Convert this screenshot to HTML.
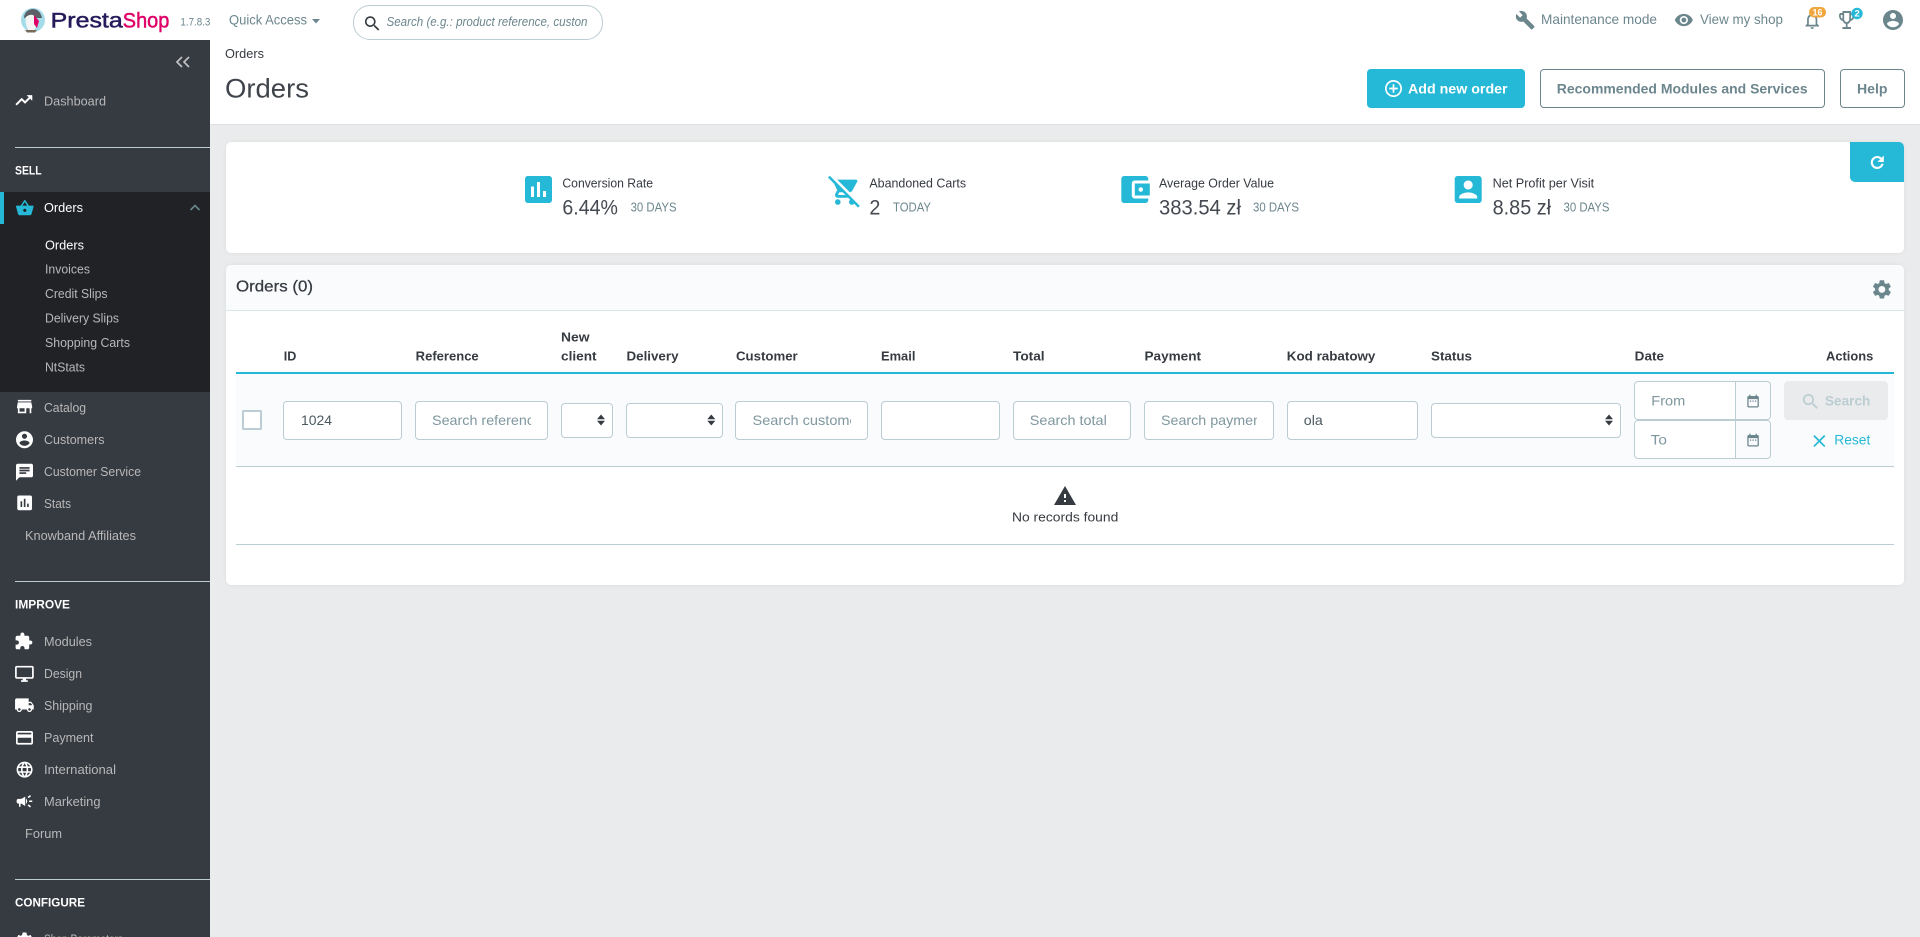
<!DOCTYPE html>
<html lang="en"><head><meta charset="utf-8"><title>Orders</title>
<style>
html,body{margin:0;padding:0;width:1920px;height:937px;overflow:hidden;background:#eaebec}
.b{position:absolute;box-sizing:border-box}
.i{background:#fff;border:1px solid #bbcdd2;border-radius:4px}
.card{background:#fff;border-radius:5px;box-shadow:0 0 4px rgba(0,0,0,.06)}
svg.o{position:absolute;left:0;top:0}
text{font-family:"Liberation Sans",sans-serif;font-size:13px;fill:#363a41;transform:translateY(-.7px)}
.s text,text.s{fill:#b8b8b8}
.h text{font-weight:bold;fill:#363a41}
.ph{fill:#7f979f;font-size:14px}
.g{fill:#6c868e}
.w{fill:#fff}
.n{font-weight:bold;fill:#fff;font-size:12px}
.v{font-size:21px;fill:#454a52}
</style></head><body>
<div class="b" style="left:0;top:0;width:1920px;height:40px;background:#fff"></div>
<div class="b" style="left:210px;top:40px;width:1710px;height:85px;background:#fff;border-bottom:1px solid #dfe1e3"></div>
<div class="b" style="left:0;top:40px;width:210px;height:897px;background:#363a41"></div>
<div class="b" style="left:0;top:192px;width:210px;height:200px;background:#202226"></div>
<div class="b" style="left:0;top:192px;width:4px;height:32px;background:#25b9d7"></div>
<div class="b" style="left:15px;top:147px;width:195px;height:1px;background:#bbcdd2"></div>
<div class="b" style="left:15px;top:581px;width:195px;height:1px;background:#bbcdd2"></div>
<div class="b" style="left:15px;top:879px;width:195px;height:1px;background:#bbcdd2"></div>
<div class="b" style="left:353px;top:5px;width:250px;height:35px;border:1px solid #bbcdd2;border-radius:17px;background:#fff"></div>
<div class="b" style="left:1367px;top:69px;width:158px;height:39px;background:#25b9d7;border-radius:4px"></div>
<div class="b" style="left:1540px;top:69px;width:285px;height:39px;border:1px solid #6c868e;border-radius:4px"></div>
<div class="b" style="left:1840px;top:69px;width:65px;height:39px;border:1px solid #6c868e;border-radius:4px"></div>
<div class="b card" style="left:226px;top:142px;width:1678px;height:111px"></div>
<div class="b" style="left:1850px;top:142px;width:54px;height:40px;background:#25b9d7;border-radius:0 5px 0 5px"></div>
<div class="b card" style="left:226px;top:265px;width:1678px;height:320px"></div>
<div class="b" style="left:226px;top:265px;width:1678px;height:46px;background:#fafbfc;border-bottom:1px solid #dbe6e9;border-radius:5px 5px 0 0"></div>
<div class="b" style="left:236px;top:372px;width:1658px;height:95px;background:#fafbfc;border-top:2px solid #25b9d7;border-bottom:1px solid #bbcdd2"></div>
<div class="b" style="left:236px;top:544px;width:1658px;height:1px;background:#bbcdd2"></div>
<div class="b" style="left:242px;top:410px;width:20px;height:20px;background:#fff;border:2px solid #bbcdd2;border-radius:2px"></div>
<div class="b i" style="left:283px;top:401px;width:119px;height:39px"></div>
<div class="b i" style="left:415px;top:401px;width:133px;height:39px"></div>
<div class="b i" style="left:561px;top:403px;width:52px;height:35px"></div>
<div class="b i" style="left:626px;top:403px;width:97px;height:35px"></div>
<div class="b i" style="left:735px;top:401px;width:133px;height:39px"></div>
<div class="b i" style="left:881px;top:401px;width:119px;height:39px"></div>
<div class="b i" style="left:1013px;top:401px;width:118px;height:39px"></div>
<div class="b i" style="left:1144px;top:401px;width:130px;height:39px"></div>
<div class="b i" style="left:1287px;top:401px;width:131px;height:39px"></div>
<div class="b i" style="left:1431px;top:403px;width:190px;height:35px"></div>
<div class="b i" style="left:1634px;top:381px;width:137px;height:39px"></div>
<div class="b" style="left:1735px;top:382px;width:35px;height:37px;background:#fafbfc;border-left:1px solid #bbcdd2;border-radius:0 4px 4px 0"></div>
<div class="b i" style="left:1634px;top:420px;width:137px;height:39px"></div>
<div class="b" style="left:1735px;top:421px;width:35px;height:37px;background:#fafbfc;border-left:1px solid #bbcdd2;border-radius:0 4px 4px 0"></div>
<div class="b" style="left:1784px;top:381px;width:104px;height:39px;background:#eaebec;border-radius:4px"></div>

<svg class="o" width="1920" height="937" viewBox="0 0 1920 937" xmlns="http://www.w3.org/2000/svg">
<!-- logo -->
<circle cx="33" cy="20" r="12" fill="#a4dbe8"/>
<path d="M24 18c0-6 5-9 9-9s8 3 9 9l-5 0-6-2z" fill="#5b6167"/>
<path d="M26 17c3-3 8-3 9 0l2 7-3 7h-5c-3-4-4-9-3-14z" fill="#f4f4f4"/>
<path d="M34 15l5 6-2 7-3-4z" fill="#df0067"/>
<path d="M25 30h12l-2 2.500h-8z" fill="#7a6a58"/>
<text x="50.700" y="28" textLength="72" lengthAdjust="spacingAndGlyphs" style="font-size:21px;fill:#251b5b;stroke:#251b5b;stroke-width:.5">Presta</text>
<text x="122.800" y="28" textLength="46.500" lengthAdjust="spacingAndGlyphs" style="font-size:21px;fill:#df0067;stroke:#df0067;stroke-width:.5">Shop</text>
<text x="180.400" y="26" class="g" textLength="30" lengthAdjust="spacingAndGlyphs" style="font-size:11px">1.7.8.3</text>
<text x="229" y="25" class="g" textLength="78" lengthAdjust="spacingAndGlyphs" style="font-size:14px">Quick Access</text>
<path d="M312 19h8l-4 4.500z" fill="#6c868e"/>
<path transform="translate(362.500 13.800) scale(.82)" fill="#363a41" d="M15.500 14h-.79l-.28-.27C15.410 12.590 16 11.110 16 9.500 16 5.910 13.090 3 9.500 3S3 5.910 3 9.500 5.910 16 9.500 16c1.610 0 3.090-.59 4.230-1.570l.27.28v.79l5 4.990L20.490 19l-4.990-5zm-6 0C7.010 14 5 11.990 5 9.500S7.010 5 9.500 5 14 7.010 14 9.500 11.990 14 9.500 14z"/>
<text x="386.500" y="26.700" class="g" textLength="201" lengthAdjust="spacingAndGlyphs" style="font-style:italic">Search (e.g.: product reference, custon</text>
<!-- header right -->
<path transform="translate(1515 10) scale(.85)" fill="#6c868e" d="M22.700 19l-9.100-9.100c.9-2.300.4-5-1.500-6.900-2-2-5-2.400-7.400-1.300L9 6 6 9 1.600 4.700C.4 7.100.9 10.100 2.900 12.100c1.900 1.900 4.600 2.400 6.900 1.500l9.100 9.100c.4.4 1 .4 1.400 0l2.300-2.300c.5-.4.5-1.100.1-1.400z"/>
<text x="1541" y="24.700" class="g" textLength="116" lengthAdjust="spacingAndGlyphs" style="font-size:14px">Maintenance mode</text>
<path transform="translate(1674 10.200) scale(.82)" fill="#6c868e" d="M12 4.500C7 4.500 2.730 7.610 1 12c1.730 4.390 6 7.500 11 7.500s9.270-3.110 11-7.500c-1.730-4.390-6-7.500-11-7.500zM12 17c-2.760 0-5-2.240-5-5s2.240-5 5-5 5 2.240 5 5-2.240 5-5 5zm0-8c-1.660 0-3 1.340-3 3s1.340 3 3 3 3-1.340 3-3-1.340-3-3-3z"/>
<text x="1700" y="24.700" class="g" textLength="83" lengthAdjust="spacingAndGlyphs" style="font-size:14px">View my shop</text>
<path transform="translate(1802 10.300) scale(.85)" fill="#6c868e" d="M12 22c1.100 0 2-.9 2-2h-4c0 1.100.9 2 2 2zm6-6v-5c0-3.070-1.630-5.640-4.500-6.320V4c0-.83-.67-1.500-1.500-1.500s-1.500.67-1.500 1.500v.68C7.640 5.360 6 7.920 6 11v5l-2 2v1h16v-1l-2-2zm-2 1H8v-6c0-2.480 1.510-4.500 4-4.500s4 2.020 4 4.500v6z"/>
<rect x="1809" y="7" width="17" height="10.500" rx="5" fill="#f0a63c"/>
<text x="1812.500" y="16.300" class="w" textLength="10" lengthAdjust="spacingAndGlyphs" style="font-size:9.500px;font-weight:bold">16</text>
<path transform="translate(1836.500 8) scale(.85 1)" fill="#6c868e" d="M19 5h-2V3H7v2H5c-1.100 0-2 .9-2 2v1c0 2.550 1.920 4.630 4.390 4.940.63 1.500 1.980 2.630 3.610 2.960V19H7v2h10v-2h-4v-3.100c1.630-.33 2.980-1.460 3.610-2.960C19.080 12.630 21 10.550 21 8V7c0-1.100-.9-2-2-2zM5 8V7h2v3.820C5.840 10.400 5 9.300 5 8zm7 6c-1.650 0-3-1.350-3-3V5h6v6c0 1.650-1.350 3-3 3zm7-6c0 1.300-.84 2.400-2 2.820V7h2v1z"/>
<circle cx="1857" cy="13.500" r="5.700" fill="#25b9d7"/>
<text x="1854.500" y="17.300" class="w" style="font-size:9.500px;font-weight:bold">2</text>
<path transform="translate(1881 8)" fill="#6c868e" d="M12 2C6.480 2 2 6.480 2 12s4.480 10 10 10 10-4.480 10-10S17.520 2 12 2zm0 3c1.660 0 3 1.340 3 3s-1.340 3-3 3-3-1.340-3-3 1.340-3 3-3zm0 14.200c-2.500 0-4.710-1.280-6-3.220.03-1.990 4-3.080 6-3.080 1.990 0 5.970 1.090 6 3.080-1.290 1.940-3.500 3.220-6 3.220z"/>
<!-- toolbar -->
<text x="225" y="58.500" textLength="39" lengthAdjust="spacingAndGlyphs">Orders</text>
<text x="225" y="98" textLength="84" lengthAdjust="spacingAndGlyphs" style="font-size:27px;fill:#3f444b">Orders</text>
<path transform="translate(1383.300 78.300) scale(.85)" fill="#fff" d="M13 7h-2v4H7v2h4v4h2v-4h4v-2h-4V7zm-1-5C6.480 2 2 6.480 2 12s4.480 10 10 10 10-4.480 10-10S17.520 2 12 2zm0 18c-4.410 0-8-3.590-8-8s3.590-8 8-8 8 3.590 8 8-3.590 8-8 8z"/>
<text x="1408" y="94" class="w" textLength="99.600" lengthAdjust="spacingAndGlyphs" style="font-size:14px;font-weight:bold">Add new order</text>
<text x="1556.800" y="94" class="g" textLength="250.800" lengthAdjust="spacingAndGlyphs" style="font-size:14px;font-weight:bold">Recommended Modules and Services</text>
<text x="1857" y="94" class="g" textLength="30.500" lengthAdjust="spacingAndGlyphs" style="font-size:14px;font-weight:bold">Help</text>
<path transform="translate(1867.900 153.100) scale(.78)" fill="#fff" stroke="#fff" stroke-width=".7" d="M17.650 6.350C16.200 4.900 14.210 4 12 4c-4.420 0-7.990 3.580-7.990 8s3.570 8 7.990 8c3.730 0 6.840-2.550 7.730-6h-2.080c-.82 2.330-3.040 4-5.650 4-3.310 0-6-2.690-6-6s2.690-6 6-6c1.660 0 3.140.69 4.220 1.780L13 11h7V4l-2.350 2.350z"/>
<!-- sidebar -->
<path d="M182 57l-5 5 5 5M189 57l-5 5 5 5" fill="none" stroke="#bebebe" stroke-width="1.800"/>
<path transform="translate(14 90.500) scale(.82)" fill="#fff" stroke="#fff" stroke-width=".6" d="M16 6l2.290 2.290-4.880 4.880-4-4L2 16.590 3.410 18l6-6 4 4 6.300-6.290L22 12V6z"/>
<g class="s">
<text x="44" y="106" textLength="62" lengthAdjust="spacingAndGlyphs">Dashboard</text>
<text x="45" y="274" textLength="45" lengthAdjust="spacingAndGlyphs">Invoices</text>
<text x="45" y="298.700" textLength="62.500" lengthAdjust="spacingAndGlyphs">Credit Slips</text>
<text x="45" y="323" textLength="74" lengthAdjust="spacingAndGlyphs">Delivery Slips</text>
<text x="45" y="347.500" textLength="85" lengthAdjust="spacingAndGlyphs">Shopping Carts</text>
<text x="45" y="372" textLength="40" lengthAdjust="spacingAndGlyphs">NtStats</text>
<text x="44" y="412.500" textLength="42" lengthAdjust="spacingAndGlyphs">Catalog</text>
<text x="44" y="444.500" textLength="60.500" lengthAdjust="spacingAndGlyphs">Customers</text>
<text x="44" y="476.500" textLength="97" lengthAdjust="spacingAndGlyphs">Customer Service</text>
<text x="44" y="508.500" textLength="27" lengthAdjust="spacingAndGlyphs">Stats</text>
<text x="25" y="540.500" textLength="111" lengthAdjust="spacingAndGlyphs">Knowband Affiliates</text>
<text x="44" y="646.500" textLength="48" lengthAdjust="spacingAndGlyphs">Modules</text>
<text x="44" y="678.500" textLength="38" lengthAdjust="spacingAndGlyphs">Design</text>
<text x="44" y="710.500" textLength="48.500" lengthAdjust="spacingAndGlyphs">Shipping</text>
<text x="44" y="742.500" textLength="49.500" lengthAdjust="spacingAndGlyphs">Payment</text>
<text x="44" y="774.500" textLength="72" lengthAdjust="spacingAndGlyphs">International</text>
<text x="44" y="806.500" textLength="56.500" lengthAdjust="spacingAndGlyphs">Marketing</text>
<text x="25" y="838.500" textLength="37" lengthAdjust="spacingAndGlyphs">Forum</text>
<text x="44" y="944" textLength="79" lengthAdjust="spacingAndGlyphs">Shop Parameters</text>
</g>
<text x="15" y="175" class="n" textLength="26.600" lengthAdjust="spacingAndGlyphs">SELL</text>
<text x="15" y="609" class="n" textLength="55" lengthAdjust="spacingAndGlyphs">IMPROVE</text>
<text x="15" y="907" class="n" textLength="70" lengthAdjust="spacingAndGlyphs">CONFIGURE</text>
<path transform="translate(15.200 198.400) scale(.8)" fill="#25b9d7" d="M17.210 9l-4.380-6.560c-.19-.28-.51-.42-.83-.42-.32 0-.64.14-.83.43L6.790 9H2c-.55 0-1 .45-1 1 0 .09.01.18.04.27l2.540 9.270c.23.840 1 1.460 1.920 1.460h13c.92 0 1.690-.62 1.930-1.460l2.540-9.270L23 10c0-.55-.45-1-1-1h-4.790zM9 9l3-4.400L15 9H9zm3 8c-1.100 0-2-.9-2-2s.9-2 2-2 2 .9 2 2-.9 2-2 2z"/>
<text x="44" y="212.500" class="w" textLength="39" lengthAdjust="spacingAndGlyphs">Orders</text>
<path d="M190.500 210l4.500-4.500 4.500 4.500" fill="none" stroke="#6c868e" stroke-width="1.600"/>
<text x="45" y="250" class="w" textLength="39" lengthAdjust="spacingAndGlyphs">Orders</text>
<g fill="#fff">
<path transform="translate(14.500 396.500) scale(.84)" d="M20 4H4v2h16V4zm1 10v-2l-1-5H4l-1 5v2h1v6h10v-6h4v6h2v-6h1zm-9 4H6v-4h6v4z"/>
<path transform="translate(14.300 429.500) scale(.85)" d="M12 2C6.480 2 2 6.480 2 12s4.480 10 10 10 10-4.480 10-10S17.520 2 12 2zm0 3c1.660 0 3 1.340 3 3s-1.340 3-3 3-3-1.340-3-3 1.340-3 3-3zm0 14.200c-2.500 0-4.710-1.280-6-3.220.03-1.990 4-3.080 6-3.080 1.990 0 5.970 1.090 6 3.080-1.290 1.940-3.500 3.220-6 3.220z"/>
<path transform="translate(14.300 462) scale(.85)" d="M20 2H4c-1.100 0-1.990.9-1.990 2L2 22l4-4h14c1.100 0 2-.9 2-2V4c0-1.100-.9-2-2-2zM6 9h12v2H6V9zm8 5H6v-2h8v2zm4-6H6V6h12v2z"/>
<path transform="translate(14.800 493) scale(.82)" d="M19 3H5c-1.100 0-2 .9-2 2v14c0 1.100.9 2 2 2h14c1.100 0 2-.9 2-2V5c0-1.100-.9-2-2-2zM9 17H7v-7h2v7zm4 0h-2V7h2v10zm4 0h-2v-4h2v4z"/>
<path transform="translate(14 631.700) scale(.8)" d="M20.500 11H19V7c0-1.100-.9-2-2-2h-4V3.500C13 2.120 11.880 1 10.500 1S8 2.120 8 3.500V5H4c-1.100 0-1.990.9-1.990 2v3.800H3.500c1.490 0 2.700 1.210 2.700 2.700s-1.210 2.700-2.700 2.700H2V20c0 1.100.9 2 2 2h3.800v-1.500c0-1.490 1.210-2.700 2.700-2.700 1.490 0 2.700 1.210 2.700 2.700V22H17c1.100 0 2-.9 2-2v-4h1.500c1.380 0 2.500-1.120 2.500-2.500S21.880 11 20.500 11z"/>
<path transform="translate(14.200 664.300) scale(.85 .8)" d="M21 2H3c-1.100 0-2 .9-2 2v12c0 1.100.9 2 2 2h7v2H8v2h8v-2h-2v-2h7c1.100 0 2-.9 2-2V4c0-1.100-.9-2-2-2zm0 14H3V4h18v12z"/>
<path transform="translate(14.200 695) scale(.85)" d="M20 8h-3V4H3c-1.100 0-2 .9-2 2v11h2c0 1.660 1.340 3 3 3s3-1.340 3-3h6c0 1.660 1.340 3 3 3s3-1.340 3-3h2v-5l-3-4zM6 18.500c-.83 0-1.500-.67-1.500-1.500s.67-1.500 1.500-1.500 1.500.67 1.500 1.500-.67 1.500-1.500 1.500zm13.500-9l1.960 2.500H17V9.500h2.500zm-1.500 9c-.83 0-1.500-.67-1.500-1.500s.67-1.500 1.500-1.500 1.500.67 1.500 1.500-.67 1.500-1.500 1.500z"/>
<path transform="translate(14.300 727.600) scale(.85)" d="M20 4H4c-1.110 0-1.990.89-1.990 2L2 18c0 1.110.89 2 2 2h16c1.110 0 2-.89 2-2V6c0-1.110-.89-2-2-2zm0 14H4v-6h16v6zm0-10H4V6h16v2z"/>
<path transform="translate(15 760) scale(.8)" d="M11.990 2C6.470 2 2 6.480 2 12s4.470 10 9.990 10C17.520 22 22 17.520 22 12S17.520 2 11.990 2zm6.930 6h-2.950c-.32-1.250-.78-2.450-1.380-3.560 1.840.63 3.370 1.910 4.330 3.560zM12 4.040c.83 1.200 1.480 2.530 1.910 3.960h-3.820c.43-1.430 1.080-2.760 1.910-3.960zM4.260 14C4.100 13.360 4 12.690 4 12s.1-1.360.26-2h3.380c-.08.66-.14 1.320-.14 2 0 .68.06 1.340.14 2H4.260zm.82 2h2.950c.32 1.250.78 2.450 1.380 3.560-1.840-.63-3.370-1.900-4.330-3.560zm2.950-8H5.080c.96-1.660 2.490-2.930 4.330-3.560C8.810 5.550 8.350 6.750 8.030 8zM12 19.960c-.83-1.200-1.480-2.530-1.910-3.960h3.820c-.43 1.430-1.080 2.760-1.910 3.960zM14.340 14H9.660c-.09-.66-.16-1.320-.16-2 0-.68.07-1.350.16-2h4.680c.09.65.16 1.320.16 2 0 .68-.07 1.340-.16 2zm.25 5.560c.6-1.110 1.060-2.310 1.380-3.560h2.950c-.96 1.650-2.490 2.930-4.330 3.560zM16.360 14c.08-.66.14-1.320.14-2 0-.68-.06-1.340-.14-2h3.380c.16.64.26 1.310.26 2s-.1 1.360-.26 2h-3.380z"/>
<path transform="translate(15.100 791.900) scale(.78)" d="M18 11v2h4v-2h-4zm-2 6.610c.96.71 2.210 1.650 3.200 2.390.4-.53.8-1.070 1.200-1.600-.99-.74-2.240-1.680-3.200-2.400-.4.54-.8 1.080-1.200 1.610zM20.400 5.600c-.4-.53-.8-1.070-1.200-1.600-.99.74-2.240 1.680-3.200 2.400.4.53.8 1.070 1.200 1.600.96-.72 2.210-1.650 3.200-2.400zM4 9c-1.100 0-2 .9-2 2v2c0 1.100.9 2 2 2h1v4h2v-4h1l5 3V6L8 9H4zm11.500 3c0-1.330-.58-2.530-1.500-3.350v6.690c.92-.81 1.500-2.010 1.500-3.340z"/>
<path transform="translate(14.300 930.500) scale(.85)" d="M19.140 12.940c.04-.3.06-.61.06-.94 0-.32-.02-.64-.07-.94l2.030-1.580c.18-.14.23-.41.12-.61l-1.920-3.320c-.12-.22-.37-.29-.59-.22l-2.390.96c-.5-.38-1.030-.7-1.620-.94l-.36-2.540c-.04-.24-.24-.41-.48-.41h-3.840c-.24 0-.43.17-.47.41l-.36 2.540c-.59.24-1.130.57-1.620.94l-2.390-.96c-.22-.08-.47 0-.59.22L2.740 8.870c-.12.21-.08.47.12.61l2.030 1.580c-.05.3-.09.63-.09.94s.02.64.07.94l-2.030 1.580c-.18.14-.23.41-.12.61l1.920 3.320c.12.22.37.29.59.22l2.390-.96c.5.38 1.030.7 1.620.94l.36 2.540c.05.24.24.41.48.41h3.840c.24 0 .44-.17.47-.41l.36-2.540c.59-.24 1.130-.56 1.620-.94l2.390.96c.22.08.47 0 .59-.22l1.920-3.320c.12-.22.07-.47-.12-.61l-2.010-1.580zM12 15.600c-1.980 0-3.600-1.620-3.600-3.600s1.620-3.600 3.600-3.600 3.600 1.620 3.600 3.600-1.620 3.600-3.600 3.600z"/>
</g>
<!-- KPI -->
<g fill="#25b9d7">
<path transform="translate(520.500 171.500) scale(1.500)" d="M19 3H5c-1.100 0-2 .9-2 2v14c0 1.100.9 2 2 2h14c1.100 0 2-.9 2-2V5c0-1.100-.9-2-2-2zM9 17H7v-7h2v7zm4 0h-2V7h2v10zm4 0h-2v-4h2v4z"/>
<path transform="translate(828 174) scale(1.400)" d="M22.730 22.730L2.770 2.770 2 2l-.73-.73L0 2.540l4.390 4.390 2.210 4.660-1.350 2.450c-.16.28-.25.61-.25.96 0 1.100.9 2 2 2h7.460l1.380 1.380c-.5.36-.83.95-.83 1.620 0 1.100.89 2 1.990 2 .67 0 1.260-.33 1.620-.84L21.460 24l1.270-1.270zM7.420 15c-.14 0-.25-.11-.25-.25l.03-.12.9-1.630h2.360l2 2H7.420zm8.130-2c.75 0 1.410-.41 1.750-1.030l3.580-6.490c.08-.14.12-.31.12-.48 0-.55-.45-1-1-1H6.540l9.010 9zM7 18c-1.100 0-1.990.9-1.990 2S5.900 22 7 22s2-.9 2-2-.9-2-2-2z"/>
<path transform="translate(1116.800 171.500) scale(1.500)" d="M21 18v1c0 1.100-.9 2-2 2H5c-1.110 0-2-.9-2-2V5c0-1.100.89-2 2-2h14c1.100 0 2 .9 2 2v1h-9c-1.110 0-2 .9-2 2v8c0 1.100.89 2 2 2h9zm-9-2h10V8H12v8zm4-2.500c-.83 0-1.500-.67-1.500-1.500s.67-1.500 1.500-1.500 1.500.67 1.500 1.500-.67 1.500-1.500 1.500z"/>
<path transform="translate(1450.200 171.500) scale(1.500)" d="M3 5v14c0 1.100.89 2 2 2h14c1.100 0 2-.9 2-2V5c0-1.100-.9-2-2-2H5c-1.110 0-2 .9-2 2zm12 4c0 1.660-1.340 3-3 3s-3-1.340-3-3 1.340-3 3-3 3 1.340 3 3zm-9 8c0-2 4-3.100 6-3.100s6 1.100 6 3.100v1H6v-1z"/>
</g>
<text x="562.400" y="188" textLength="90.600" lengthAdjust="spacingAndGlyphs">Conversion Rate</text>
<text x="562.400" y="215" class="v" textLength="55.500" lengthAdjust="spacingAndGlyphs">6.44%</text>
<text x="630.600" y="212" class="g" textLength="46" lengthAdjust="spacingAndGlyphs">30 DAYS</text>
<text x="869.400" y="188" textLength="96.700" lengthAdjust="spacingAndGlyphs">Abandoned Carts</text>
<text x="869.400" y="215" class="v" textLength="11" lengthAdjust="spacingAndGlyphs">2</text>
<text x="893" y="212" class="g" textLength="38" lengthAdjust="spacingAndGlyphs">TODAY</text>
<text x="1159" y="188" textLength="115" lengthAdjust="spacingAndGlyphs">Average Order Value</text>
<text x="1159" y="215" class="v" textLength="82" lengthAdjust="spacingAndGlyphs">383.54 zł</text>
<text x="1253" y="212" class="g" textLength="46" lengthAdjust="spacingAndGlyphs">30 DAYS</text>
<text x="1492.600" y="188" textLength="101.600" lengthAdjust="spacingAndGlyphs">Net Profit per Visit</text>
<text x="1492.600" y="215" class="v" textLength="58.500" lengthAdjust="spacingAndGlyphs">8.85 zł</text>
<text x="1563.500" y="212" class="g" textLength="46" lengthAdjust="spacingAndGlyphs">30 DAYS</text>
<!-- table -->
<text x="236" y="292" textLength="77" lengthAdjust="spacingAndGlyphs" style="font-size:16px;stroke:#363a41;stroke-width:.25">Orders (0)</text>
<path transform="translate(1870.500 278) scale(.95)" fill="#6c868e" d="M19.140 12.940c.04-.3.06-.61.06-.94 0-.32-.02-.64-.07-.94l2.030-1.580c.18-.14.23-.41.12-.61l-1.920-3.320c-.12-.22-.37-.29-.59-.22l-2.390.96c-.5-.38-1.030-.7-1.620-.94l-.36-2.540c-.04-.24-.24-.41-.48-.41h-3.840c-.24 0-.43.17-.47.41l-.36 2.540c-.59.24-1.130.57-1.620.94l-2.390-.96c-.22-.08-.47 0-.59.22L2.740 8.870c-.12.21-.08.47.12.61l2.030 1.580c-.05.3-.09.63-.09.94s.02.64.07.94l-2.030 1.580c-.18.14-.23.41-.12.61l1.920 3.320c.12.22.37.29.59.22l2.390-.96c.5.38 1.030.7 1.620.94l.36 2.540c.05.24.24.41.48.41h3.840c.24 0 .44-.17.47-.41l.36-2.540c.59-.24 1.130-.56 1.620-.94l2.390.96c.22.08.47 0 .59-.22l1.920-3.320c.12-.22.07-.47-.12-.61l-2.010-1.580zM12 15.600c-1.980 0-3.600-1.620-3.600-3.600s1.620-3.600 3.600-3.600 3.600 1.620 3.600 3.600-1.620 3.600-3.600 3.600z"/>
<g class="h">
<text x="283.700" y="361" textLength="12.600" lengthAdjust="spacingAndGlyphs">ID</text>
<text x="415.700" y="361" textLength="63" lengthAdjust="spacingAndGlyphs">Reference</text>
<text x="561" y="342" textLength="28.500" lengthAdjust="spacingAndGlyphs">New</text>
<text x="561" y="361" textLength="35.600" lengthAdjust="spacingAndGlyphs">client</text>
<text x="626.500" y="361" textLength="52" lengthAdjust="spacingAndGlyphs">Delivery</text>
<text x="736" y="361" textLength="61.700" lengthAdjust="spacingAndGlyphs">Customer</text>
<text x="881" y="361" textLength="34.400" lengthAdjust="spacingAndGlyphs">Email</text>
<text x="1013" y="361" textLength="31.600" lengthAdjust="spacingAndGlyphs">Total</text>
<text x="1144.500" y="361" textLength="56.500" lengthAdjust="spacingAndGlyphs">Payment</text>
<text x="1286.800" y="361" textLength="88.600" lengthAdjust="spacingAndGlyphs">Kod rabatowy</text>
<text x="1431" y="361" textLength="41" lengthAdjust="spacingAndGlyphs">Status</text>
<text x="1634.700" y="361" textLength="29.300" lengthAdjust="spacingAndGlyphs">Date</text>
<text x="1826" y="361" textLength="47.300" lengthAdjust="spacingAndGlyphs">Actions</text>
</g>
<text x="301" y="425.700" textLength="31" lengthAdjust="spacingAndGlyphs" style="font-size:14px;fill:#4b5a60">1024</text>
<svg x="432" y="405" width="99" height="30"><text x="0" y="20.700" class="ph" textLength="110" lengthAdjust="spacingAndGlyphs">Search reference</text></svg>
<svg x="752.500" y="405" width="98.500" height="30"><text x="0" y="20.700" class="ph" textLength="110" lengthAdjust="spacingAndGlyphs">Search customer</text></svg>
<text x="1029.800" y="425.700" class="ph" textLength="77" lengthAdjust="spacingAndGlyphs">Search total</text>
<svg x="1161" y="405" width="96" height="30"><text x="0" y="20.700" class="ph" textLength="104" lengthAdjust="spacingAndGlyphs">Search payment</text></svg>
<text x="1303.800" y="425.700" textLength="19" lengthAdjust="spacingAndGlyphs" style="font-size:14px;fill:#4b5a60">ola</text>
<path d="M601 414.500l4 4.800h-8zM601 425.500l4-4.800h-8zM711.300 414.500l4 4.800h-8zM711.300 425.500l4-4.800h-8zM1609 414.500l4 4.800h-8zM1609 425.500l4-4.800h-8z" fill="#363a41"/>
<text x="1651.300" y="406" class="ph" textLength="34" lengthAdjust="spacingAndGlyphs">From</text>
<text x="1650.700" y="445" class="ph" textLength="16.300" lengthAdjust="spacingAndGlyphs">To</text>
<path transform="translate(1745.400 393.400) scale(.64)" fill="#6c868e" d="M9 11H7v2h2v-2zm4 0h-2v2h2v-2zm4 0h-2v2h2v-2zm2-7h-1V2h-2v2H8V2H6v2H5c-1.110 0-1.990.9-1.990 2L3 20c0 1.100.89 2 2 2h14c1.100 0 2-.9 2-2V6c0-1.100-.9-2-2-2zm0 16H5V9h14v11z"/>
<path transform="translate(1745.400 432.400) scale(.64)" fill="#6c868e" d="M9 11H7v2h2v-2zm4 0h-2v2h2v-2zm4 0h-2v2h2v-2zm2-7h-1V2h-2v2H8V2H6v2H5c-1.110 0-1.990.9-1.990 2L3 20c0 1.100.89 2 2 2h14c1.100 0 2-.9 2-2V6c0-1.100-.9-2-2-2zm0 16H5V9h14v11z"/>
<path transform="translate(1800.400 391.500) scale(.85)" fill="#bbcdd2" d="M15.500 14h-.79l-.28-.27C15.410 12.590 16 11.110 16 9.500 16 5.910 13.090 3 9.500 3S3 5.910 3 9.500 5.910 16 9.500 16c1.610 0 3.090-.59 4.230-1.570l.27.28v.79l5 4.990L20.490 19l-4.990-5zm-6 0C7.010 14 5 11.990 5 9.500S7.010 5 9.500 5 14 7.010 14 9.500 11.990 14 9.500 14z"/>
<text x="1825" y="406" textLength="45.300" lengthAdjust="spacingAndGlyphs" style="font-size:14px;font-weight:bold;fill:#bbcdd2">Search</text>
<path transform="translate(1809 430.700) scale(.86)" fill="#25b9d7" d="M19 6.410L17.590 5 12 10.590 6.410 5 5 6.410 10.590 12 5 17.590 6.410 19 12 13.410 17.590 19 19 17.590 13.410 12z"/>
<text x="1834.300" y="445" textLength="36" lengthAdjust="spacingAndGlyphs" style="font-size:14px;fill:#25b9d7">Reset</text>
<path transform="translate(1053 484)" fill="#363a41" d="M1 21h22L12 2 1 21zm12-3h-2v-2h2v2zm0-4h-2v-4h2v4z"/>
<text x="1012" y="522.300" textLength="106.300" lengthAdjust="spacingAndGlyphs">No records found</text>
</svg>
</body></html>
